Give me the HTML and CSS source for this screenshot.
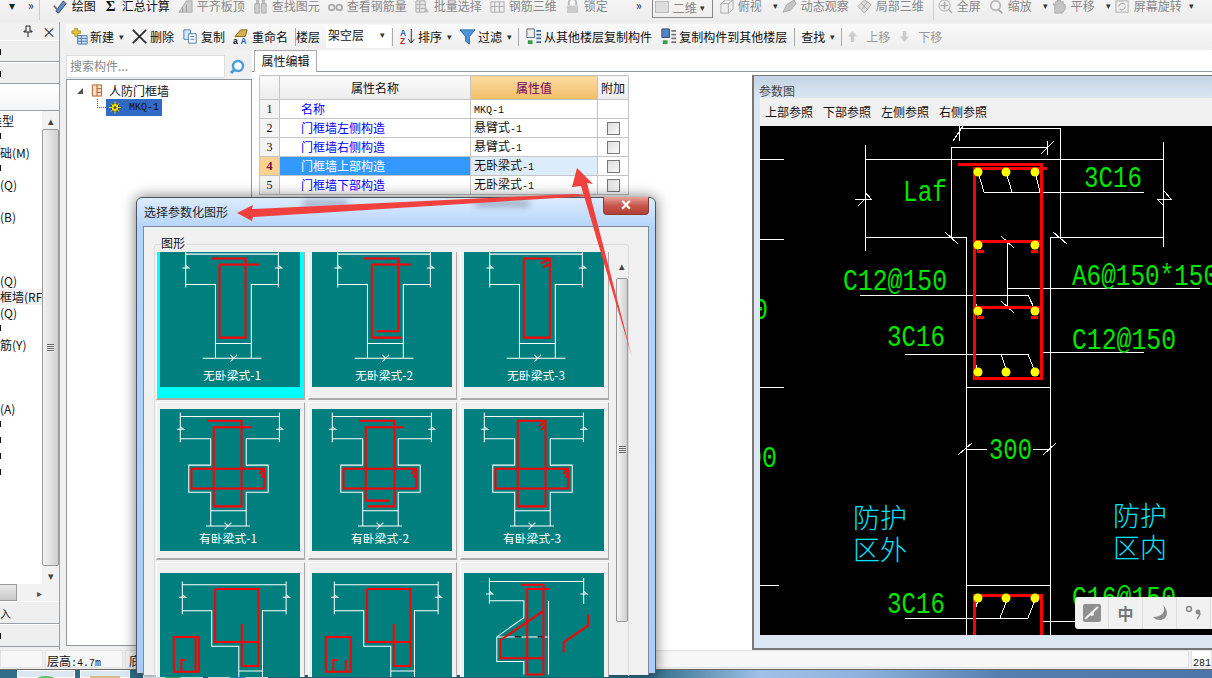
FILE: index.html
```html
<!DOCTYPE html>
<html lang="zh-CN">

<head>
    <meta charset="UTF-8">
    <title>参数化图形</title>
    <link rel="stylesheet" href="styles.css">
</head>

<body>
    <svg class="defs" width="0" height="0">
        <defs>
            <g id="t-top" class="w">
                <path d="M76 13V126M350 13V126M76 27H350M76 117H164V335M350 117H270V335M164 291H270M126 335H300" />
                <path d="M66 68H86L76 60M340 68H360L350 60M218 335L208 325M208 345L228 325" />
            </g>
            <g id="t1"><use href="#t-top" />
                <path class="r" d="M154 40H253V274H176V58H293" />
            </g>
            <g id="t2"><use href="#t-top" />
                <path class="r" d="M154 40H256V255H191M292 58H177V274H264" />
            </g>
            <g id="t3"><use href="#t-top" />
                <path class="r" d="M177 40H254V274H177ZM227 55L254 40M234 67L254 55" />
            </g>
            <g id="t-mid" class="w">
                <path d="M60 10V98M353 10V98M60 22H353M60 88H150V166H85V246H150V346M353 88H255V166H320V246H255V346M150 301H255M136 346H266" />
                <path d="M50 60H70L60 52M343 60H363L353 52M201 346L191 336M191 356L211 336" />
            </g>
            <g id="t4"><use href="#t-mid" />
                <path class="r" d="M140 35H241V288H159V54H271M93 177H308V235H93ZM293 193L308 177M300 203L308 190" />
            </g>
            <g id="t5"><use href="#t-mid" />
                <path class="r" d="M140 35H244V288H164M271 54H159V271H229M93 177H308V235H93ZM293 193L308 177M300 203L308 190" />
            </g>
            <g id="t6"><use href="#t-mid" />
                <path class="r" d="M159 35H241V288H159ZM93 177H308V235H93ZM293 193L308 177M300 203L308 190M221 52L241 35M228 62L241 48" />
            </g>
            <g id="t-low" class="w">
                <path d="M66 25V122M373 25V122M66 35H373M66 112H153V217H233V310M373 112H303V310M233 290H303" />
                <path d="M56 72H76L66 64M363 72H383L373 64" />
            </g>
            <g id="t7"><use href="#t-low" />
                <path class="r" d="M163 47H291V275H242V151M163 47V204H291M41 189H115V292H41ZM105 189V292M63 292V257H75" />
            </g>
            <g id="t8"><use href="#t-low" />
                <path class="r" d="M163 47H291V275H242V151M163 47V204H291M41 189H115V292H41ZM63 292V257H75M100 292V257" />
            </g>
        </defs>
    </svg>

    <div class="topbar">
        <span class="chev first">▾</span>
        <span class="chev">»</span>
        <span class="vsep lead"></span>
        <div class="tool on"><svg class="ico" viewBox="0 0 16 16"><path d="M3 13L11 2L14 5L6 15Z" fill="#5b8fd0" stroke="#345" /><path d="M1 7L5 12" stroke="#777" stroke-width="2" /></svg>绘图</div>
        <div class="tool on"><span class="sigma">Σ</span>汇总计算</div>
        <div class="tool"><svg class="ico" viewBox="0 0 16 16"><path d="M1 14L9 2H15V14Z" fill="#ccc" stroke="#aaa" /><path d="M5 14V9M9 14V6" stroke="#999" /></svg>平齐板顶</div>
        <div class="tool"><svg class="ico" viewBox="0 0 16 16"><path d="M2 15V5H7V15ZM9 15V5H14V15ZM4 5V1H6V5M10 5V1H12V5" fill="#ccc" stroke="#aaa" /></svg>查找图元</div>
        <div class="tool"><svg class="ico" viewBox="0 0 16 16"><circle cx="4" cy="9" r="3" fill="none" stroke="#aaa" stroke-width="2" /><circle cx="12" cy="9" r="3" fill="none" stroke="#aaa" stroke-width="2" /></svg>查看钢筋量</div>
        <div class="tool"><svg class="ico" viewBox="0 0 16 16"><path d="M1 2H11V14H1ZM1 6H11M1 10H11M5 2V14" fill="#e4e4e4" stroke="#aaa" /><path d="M11 8L15 14H10Z" fill="#bbb" /></svg>批量选择</div>
        <div class="tool"><svg class="ico" viewBox="0 0 16 16"><path d="M1 3H15V14H1ZM5 3V14M10 3V14M1 8H15" fill="#eee" stroke="#aaa" /></svg>钢筋三维</div>
        <div class="tool"><svg class="ico" viewBox="0 0 16 16"><path d="M4 7V4A4 4 0 0 1 12 4V7" fill="none" stroke="#bbb" stroke-width="2" /><rect x="2" y="7" width="12" height="8" fill="#ccc" /></svg>锁定</div>
        <span class="chev gap-a">»</span>
        <div class="view-box"><span class="view-swatch"></span>二维<span class="arrow">▾</span></div>
        <div class="tool tight"><svg class="ico" viewBox="0 0 16 16"><path d="M2 5L7 1H15V11L10 15H2ZM2 5H10V15M10 5L15 1" fill="#eee" stroke="#aaa" /></svg>俯视<span class="arrow wide">▾</span></div>
        <div class="tool"><svg class="ico" viewBox="0 0 16 16"><path d="M1 14L5 6L13 1L15 5L9 12Z" fill="#c4c4c4" stroke="#aaa" /></svg>动态观察</div>
        <div class="tool"><svg class="ico" viewBox="0 0 16 16"><path d="M8 1L15 6L8 15L1 8Z" fill="#ddd" stroke="#aaa" /><path d="M4 4L12 12M11 3L5 11" stroke="#aaa" /></svg>局部三维</div>
        <span class="vsep mid"></span>
        <div class="tool"><svg class="ico" viewBox="0 0 16 16"><circle cx="7" cy="7" r="6" fill="#eee" stroke="#aaa" /><path d="M7 3V11M3 7H11M11 11L15 15" stroke="#aaa" stroke-width="1.5" /></svg>全屏</div>
        <div class="tool"><svg class="ico" viewBox="0 0 16 16"><circle cx="7" cy="7" r="5" fill="#f4f4f4" stroke="#bbb" stroke-width="2" /><path d="M10 11L14 15" stroke="#aaa" stroke-width="2" /></svg>缩放<span class="arrow wide">▾</span></div>
        <div class="tool"><svg class="ico" viewBox="0 0 16 16"><path d="M3 15V8L1 5L4 6V3H6V1H9V3H12V6H14V11L11 15Z" fill="#c4c4c4" stroke="#aaa" /></svg>平移<span class="arrow wide">▾</span></div>
        <div class="tool"><svg class="ico" viewBox="0 0 16 16"><rect x="1" y="2" width="13" height="12" fill="#eee" stroke="#aaa" /><path d="M4 8A4 4 0 0 1 11 6M11 8A4 4 0 0 1 5 11" fill="none" stroke="#999" /></svg>屏幕旋转<span class="arrow">▾</span></div>
    </div>

    <div class="main">
        <aside class="nav">
            <div class="nav-head">
                <svg class="pin" viewBox="0 0 10 12"><path d="M3 1H7V6H9V7H1V6H3ZM5 7V12" fill="none" stroke="#222" /></svg>
                <span class="nav-close">×</span>
            </div>
            <div class="fold"><span class="tick"></span></div>
            <div class="fold"><span class="tick"></span></div>
            <div class="fold-open"></div>
            <div class="nav-list">
                <ul class="items">
                    <li class="shift">类型</li>
                    <li><span class="tick"></span></li>
                    <li>础(M)</li>
                    <li><span class="tick"></span></li>
                    <li>(Q)</li>
                    <li></li>
                    <li>(B)</li>
                    <li></li>
                    <li></li>
                    <li></li>
                    <li>(Q)</li>
                    <li class="current">框墙(RF</li>
                    <li>(Q)</li>
                    <li><span class="tick"></span></li>
                    <li>筋(Y)</li>
                    <li></li>
                    <li></li>
                    <li></li>
                    <li>(A)</li>
                    <li><span class="tick"></span></li>
                    <li><span class="tick"></span></li>
                    <li><span class="tick"></span></li>
                    <li><span class="tick"></span></li>
                </ul>
                <div class="vscroll">
                    <span class="sb-arrow">▴</span>
                    <div class="vthumb"><span class="grip"></span></div>
                    <span class="sb-arrow">▾</span>
                </div>
            </div>
            <div class="hscroll"><span class="hthumb"></span><span class="hright">▸</span></div>
            <div class="fold low">入</div>
            <div class="fold low"><span class="tick"></span></div>
        </aside>

        <div class="work">
            <div class="toolbar">
                <div class="tool2 m7"><svg class="ico2" viewBox="0 0 18 18"><path d="M4 0H7V3H10V6H7V9H4V6H1V3H4Z" fill="#e8c040" stroke="#a08020" stroke-width=".7" /><path d="M7 8H17V17H7ZM7 11H17M7 14H17M11 8V17" fill="#cfe0f4" stroke="#4a78b0" /></svg>新建<span class="arrow">▾</span></div>
                <div class="tool2"><svg class="ico2" viewBox="0 0 18 18"><path d="M2 2L16 16M16 2L2 16" stroke="#333" stroke-width="2" /></svg>删除</div>
                <div class="tool2"><svg class="ico2" viewBox="0 0 18 18"><path d="M2 2H9V12H2Z" fill="#dde8f5" stroke="#4a78b0" /><path d="M7 6H15V16H7ZM9 9H13M9 12H13" fill="#fff" stroke="#4a78b0" /></svg>复制</div>
                <div class="tool2"><svg class="ico2" viewBox="0 0 18 18"><path d="M2 9L8 2H15L13 9Z" fill="#d8b050" stroke="#806020" /><text x="0" y="17" class="mini">a</text><text x="8" y="17" class="mini blue">A</text></svg>重命名</div>
                <span class="vsep2 near"></span>
                <div class="tool2 t-floor">楼层</div>
                <div class="combo">架空层<span class="arrow">▾</span></div>
                <span class="vsep2"></span>
                <div class="tool2 m7"><svg class="ico2" viewBox="0 0 18 18"><text x="1" y="8" class="mini blue">A</text><text x="1" y="17" class="mini red">Z</text><path d="M13 1V15M10 12L13 16L16 12" fill="none" stroke="#222" /></svg>排序<span class="arrow">▾</span></div>
                <div class="tool2 m7"><svg class="ico2" viewBox="0 0 18 18"><path d="M1 2H17L11 9V17L7 14V9Z" fill="#4f96dc" stroke="#2c64a8" /></svg>过滤<span class="arrow">▾</span></div>
                <span class="vsep2"></span>
                <div class="tool2"><svg class="ico2" viewBox="0 0 18 18"><path d="M2 1H10V10H2Z" fill="#eee" stroke="#567" /><path d="M3 13H8V17H3Z" fill="#3a9a4a" /><path d="M12 3H17M12 7H17M12 11H17M12 15H17" stroke="#3a6ea8" stroke-width="2" /></svg>从其他楼层复制构件</div>
                <div class="tool2"><svg class="ico2" viewBox="0 0 18 18"><path d="M2 1H10V10H2Z" fill="#4f86d0" stroke="#345" /><path d="M3 13H8V17H3Z" fill="#3a9a4a" /><path d="M12 3H17M12 7H17M12 11H17M12 15H17" stroke="#777" stroke-width="2" /></svg>复制构件到其他楼层</div>
                <span class="vsep2"></span>
                <div class="tool2 m7">查找<span class="arrow">▾</span></div>
                <span class="vsep2"></span>
                <div class="tool2 off"><svg class="ico3" viewBox="0 0 10 12"><path d="M5 0L10 6H7V12H3V6H0Z" fill="#ccc" /></svg>上移</div>
                <div class="tool2 off"><svg class="ico3" viewBox="0 0 10 12"><path d="M5 12L10 6H7V0H3V6H0Z" fill="#ccc" /></svg>下移</div>
            </div>

            <div class="work-body">
                <div class="tree-col">
                    <div class="search">
                        <div class="search-box">搜索构件...</div>
                        <svg class="search-ico" viewBox="0 0 16 16"><circle cx="9" cy="7" r="5" fill="#fff" stroke="#4c9ae0" stroke-width="2.4" /><path d="M5 11L2 14" stroke="#4c9ae0" stroke-width="3" /></svg>
                    </div>
                    <div class="tree">
                        <div class="node root"><span class="twist"></span><svg class="node-ico" viewBox="0 0 12 14"><path d="M1 1H11V13H1ZM6 1V13M6 5H11M6 9H11" fill="#f8e0c8" stroke="#b05a20" /></svg>人防门框墙</div>
                        <div class="node leaf">
                            <span class="dots"></span>
                            <div class="picked"><svg class="node-ico" viewBox="0 0 12 12"><circle cx="6" cy="6" r="4" fill="#ffe600" stroke="#333" /><path d="M6 0V12M0 6H12M2 2L10 10M10 2L2 10" stroke="#ffe600" /><circle cx="6" cy="6" r="1.6" fill="#555" /></svg><span class="asc">MKQ-1</span></div>
                        </div>
                    </div>
                </div>

                <div class="editor">
                    <div class="tabs"><div class="tab">属性编辑</div></div>
                    <div class="editor-body">
                        <div class="grid-wrap">
                            <table class="props">
                                <colgroup>
                                    <col class="c-no">
                                    <col class="c-name">
                                    <col class="c-val">
                                    <col class="c-add">
                                </colgroup>
                                <tr class="head">
                                    <th></th>
                                    <th>属性名称</th>
                                    <th class="hot">属性值</th>
                                    <th>附加</th>
                                </tr>
                                <tr>
                                    <td class="no">1</td>
                                    <td class="name">名称</td>
                                    <td class="val"><span class="asc">MKQ-1</span></td>
                                    <td></td>
                                </tr>
                                <tr>
                                    <td class="no">2</td>
                                    <td class="name">门框墙左侧构造</td>
                                    <td class="val">悬臂式<span class="asc">-1</span></td>
                                    <td class="chk"><span class="box"></span></td>
                                </tr>
                                <tr>
                                    <td class="no">3</td>
                                    <td class="name">门框墙右侧构造</td>
                                    <td class="val">悬臂式<span class="asc">-1</span></td>
                                    <td class="chk"><span class="box"></span></td>
                                </tr>
                                <tr class="sel">
                                    <td class="no">4</td>
                                    <td class="name">门框墙上部构造</td>
                                    <td class="val">无卧梁式<span class="asc">-1</span></td>
                                    <td class="chk"><span class="box"></span></td>
                                </tr>
                                <tr>
                                    <td class="no">5</td>
                                    <td class="name">门框墙下部构造</td>
                                    <td class="val">无卧梁式<span class="asc">-1</span></td>
                                    <td class="chk"><span class="box"></span></td>
                                </tr>
                            </table>
                        </div>

                        <div class="param">
                            <div class="param-title">参数图</div>
                            <div class="param-menu"><span>上部参照</span><span>下部参照</span><span>左侧参照</span><span>右侧参照</span></div>
                            <svg class="canvas" viewBox="760 126 452 509">
                                <g class="cad-w">
                                    <path d="M760 159H784M760 239H784M760 387H784M760 585H779" />
                                    <path d="M865 145V251M1163 142V247M865 159H1163M865 237H966V635M1163 237H1050V635" />
                                    <path d="M855 199H871L865 192M865 199L858 206M1157 199H1171L1164 191M1157 199L1164 206" />
                                    <path d="M951 237V147H1047M1047 141V155M1041 154L1054 141M959 126V141M959 128H1060V237M953 141L963 126" />
                                    <path d="M945 232L958 244M1053 232L1067 244" />
                                    <path d="M984 192H1144M978 172L984 192M1006 172L1012 192M1035 172L1040 192" />
                                    <path d="M1007 241V307M1007 288H1200M1001 236L1014 248M1001 301L1014 313" />
                                    <path d="M860 295H1028L1035 310M973 295L978 310" />
                                    <path d="M905 354H1028L1035 372M973 354L978 372M1001 354L1007 372M1040 352H1144" />
                                    <path d="M966 387H1050M966 585H1050" />
                                    <path d="M958 455L972 443M966 449H987M1033 449H1050M1043 455L1056 443" />
                                    <path d="M905 618H1028L1035 600M973 618L978 600M1000 618L1007 600M1040 621H1080" />
                                </g>
                                <g class="cad-r">
                                    <path d="M958 164H1041V378H974V168H1047M974 241H1041M974 307H1041" />
                                    <path d="M977 251H984M1031 251H1038M977 317H984M1031 317H1038" />
                                    <path d="M974 635V595H1041V635" />
                                </g>
                                <g class="cad-y">
                                    <circle cx="978" cy="172" r="4.5" />
                                    <circle cx="1006" cy="172" r="4.5" />
                                    <circle cx="1035" cy="172" r="4.5" />
                                    <circle cx="978" cy="245" r="4.5" />
                                    <circle cx="1035" cy="245" r="4.5" />
                                    <circle cx="978" cy="311" r="4.5" />
                                    <circle cx="1035" cy="311" r="4.5" />
                                    <circle cx="978" cy="372" r="4.5" />
                                    <circle cx="1006" cy="372" r="4.5" />
                                    <circle cx="1035" cy="372" r="4.5" />
                                    <circle cx="978" cy="598" r="4.5" />
                                    <circle cx="1006" cy="598" r="4.5" />
                                    <circle cx="1035" cy="598" r="4.5" />
                                </g>
                                <g class="cad-t">
                                    <text x="1084" y="187" textLength="58" lengthAdjust="spacingAndGlyphs">3C16</text>
                                    <text x="903" y="201" textLength="44" lengthAdjust="spacingAndGlyphs">Laf</text>
                                    <text x="843" y="290" textLength="104" lengthAdjust="spacingAndGlyphs">C12@150</text>
                                    <text x="1072" y="285" textLength="146" lengthAdjust="spacingAndGlyphs">A6@150*150</text>
                                    <text x="887" y="346" textLength="58" lengthAdjust="spacingAndGlyphs">3C16</text>
                                    <text x="1072" y="349" textLength="104" lengthAdjust="spacingAndGlyphs">C12@150</text>
                                    <text x="753" y="319" textLength="15" lengthAdjust="spacingAndGlyphs">0</text>
                                    <text x="747" y="467" textLength="30" lengthAdjust="spacingAndGlyphs">00</text>
                                    <text x="989" y="459" textLength="43" lengthAdjust="spacingAndGlyphs">300</text>
                                    <text x="887" y="613" textLength="58" lengthAdjust="spacingAndGlyphs">3C16</text>
                                    <text x="1072" y="607" textLength="104" lengthAdjust="spacingAndGlyphs">C16@150</text>
                                </g>
                                <g class="cad-c">
                                    <text x="853" y="528">防护</text>
                                    <text x="853" y="560">区外</text>
                                    <text x="1113" y="526">防护</text>
                                    <text x="1113" y="558">区内</text>
                                </g>
                            </svg>
                            <div class="param-foot"></div>
                        </div>
                    </div>
                </div>
            </div>
        </div>
    </div>

    <div class="status">
        <div class="st st-a"></div>
        <div class="st st-b">层高<span class="asc">:4.7m</span></div>
        <div class="st st-c">底</div>
        <div class="st st-d"></div>
        <div class="st st-e"><span class="asc">281</span></div>
    </div>

    <div class="taskbar">
        <div class="task"><span class="blob b-arc"></span></div>
        <div class="task"><span class="blob b-pic"></span></div>
        <div class="task wide"><span class="blob b-green"></span></div>
        <div class="task wide"><span class="blob b-blue"></span></div>
    </div>

    <section class="dialog">
        <span class="ghost g1"></span>
        <span class="ghost g2"></span>
        <div class="dlg-title">选择参数化图形</div>
        <div class="dlg-close">×</div>
        <div class="dlg-body">
            <div class="group">
                <div class="group-label">图形</div>
                <div class="group-in">
                    <div class="shapes">
                        <div class="cell picked-cell"><svg class="thumb" viewBox="0 0 414 420"><use href="#t1" /><text x="213" y="400">无卧梁式-1</text></svg></div>
                        <div class="cell"><svg class="thumb" viewBox="0 0 414 420"><use href="#t2" /><text x="213" y="400">无卧梁式-2</text></svg></div>
                        <div class="cell"><svg class="thumb" viewBox="0 0 414 420"><use href="#t3" /><text x="213" y="400">无卧梁式-3</text></svg></div>
                        <div class="cell"><svg class="thumb" viewBox="0 0 414 420"><use href="#t4" /><text x="201" y="397">有卧梁式-1</text></svg></div>
                        <div class="cell"><svg class="thumb" viewBox="0 0 414 420"><use href="#t5" /><text x="201" y="397">有卧梁式-2</text></svg></div>
                        <div class="cell"><svg class="thumb" viewBox="0 0 414 420"><use href="#t6" /><text x="201" y="397">有卧梁式-3</text></svg></div>
                        <div class="cell last"><svg class="thumb" viewBox="0 0 414 420"><use href="#t7" /></svg></div>
                        <div class="cell last"><svg class="thumb" viewBox="0 0 414 420"><use href="#t8" /></svg></div>
                        <div class="cell last"><svg class="thumb" viewBox="0 0 414 420">
                                <g class="w">
                                    <path d="M75 15V92M354 15V92M75 25H354M75 82H177V132L97 189V262H177V300M250 82V300M97 189H247" />
                                    <path d="M65 62H85L75 54M344 62H364L354 54" />
                                </g>
                                <path d="M150 189H170M218 189H238" stroke="#000" stroke-width="4" />
                                <path class="r" d="M169 35H235V300H187V47H252M107 199L235 112M107 199V252H235M367 122V155L295 205V235" />
                            </svg></div>
                    </div>
                    <div class="dlg-scroll">
                        <span class="sb-arrow up">▴</span>
                        <div class="dlg-thumb"><span class="grip"></span></div>
                    </div>
                </div>
            </div>
        </div>
    </section>

    <svg class="marks" viewBox="0 0 1212 678">
        <path d="M237 213L253 205L252 209L575 194L590 196L253 217L252 221Z" />
        <path d="M577 168L593 184L587 183L632 357L581 186L572 187Z" />
    </svg>

    <div class="ime">
        <div class="ime-cell"><svg class="ime-ico" viewBox="0 0 18 18"><rect width="18" height="18" rx="2" fill="#8f8f8f" /><path d="M2 15L15 3" stroke="#eee" stroke-width="2" /><circle cx="9" cy="10" r="2" fill="#eee" /></svg></div>
        <div class="ime-cell ime-zh">中</div>
        <div class="ime-cell"><svg class="ime-ico" viewBox="0 0 18 18"><path d="M12 1C15 7 12 13 2 13C6 18 16 17 16 9C16 6 14 3 12 1Z" fill="#8f8f8f" /></svg></div>
        <div class="ime-cell"><svg class="ime-ico" viewBox="0 0 18 18"><circle cx="4" cy="5" r="2.4" fill="none" stroke="#888" stroke-width="1.5" /><circle cx="13" cy="8" r="2.4" fill="#888" /><path d="M15 9C15 12 14 13 12 15" stroke="#888" stroke-width="1.5" fill="none" /></svg></div>
    </div>
</body>

</html>
```

FILE: styles.css
```css
* {
    box-sizing: border-box;
}

html,
body {
    margin: 0;
    width: 1212px;
    height: 678px;
    overflow: hidden;
}

body {
    position: relative;
    background-color: #f0f0f0;
    color: #111;
    font-family: "Noto Sans CJK SC", "Liberation Sans", sans-serif;
    font-size: 12px;
    line-height: 14px;
}

.defs {
    position: absolute;
}

.asc {
    font-family: "Liberation Mono", monospace;
    font-size: 10px;
}

.arrow {
    font-size: 9px;
    margin-left: 3px;
    color: #333;
}

.arrow.wide {
    margin: 0 -4px 0 7px;
}

/* top toolbar */
.topbar {
    display: flex;
    height: 22px;
    padding-left: 9px;
    background: linear-gradient(#f4f4f4, #ececec);
    color: #888;
    overflow: hidden;
}

.chev {
    color: #222;
    line-height: 10px;
    margin-left: 13px;
}

.chev.first {
    margin-left: 0;
}

.chev.gap-a {
    margin: 0 10px 0 20px;
}

.vsep {
    width: 1px;
    height: 20px;
    background-color: #ccc;
}

.vsep.lead {
    margin: 0 13px 0 5px;
}

.vsep.mid {
    margin: 0 4px 0 1px;
}

.tool {
    display: flex;
    align-items: flex-start;
    gap: 4px;
    margin-right: 8px;
    margin-top: -1px;
    white-space: nowrap;
}

.tool.on {
    color: #111;
}

.tool.tight {
    margin-left: 6px;
}

.ico {
    width: 15px;
    height: 15px;
    flex: none;
}

.sigma {
    width: 14px;
    font-family: "Liberation Serif", serif;
    font-size: 15px;
    font-weight: bold;
    text-align: center;
}

.view-box {
    display: flex;
    align-items: flex-start;
    width: 61px;
    height: 20px;
    margin-top: -2px;
    padding: 2px 0 0 2px;
    border: 1px solid #888;
    white-space: nowrap;
}

.view-swatch {
    width: 14px;
    height: 12px;
    flex: none;
    margin-right: 4px;
    background-color: #ddd;
    border: 1px solid #bbb;
}

/* layout */
.main {
    display: flex;
    height: 628px;
}

.nav {
    width: 60px;
    flex: none;
    overflow: hidden;
    border-right: 1px solid #9aa0a6;
}

.nav-head {
    display: flex;
    justify-content: flex-end;
    align-items: center;
    gap: 9px;
    height: 18px;
    padding-right: 3px;
    color: #333;
}

.pin {
    width: 10px;
    height: 12px;
}

.nav-close {
    font-size: 14px;
}

.fold {
    height: 22px;
    border-top: 1px solid #fff;
    border-bottom: 1px solid #9aa0a6;
    background-color: #efefef;
    padding-top: 4px;
}

.fold.low {
    height: 23px;
    font-size: 11px;
}

.tick {
    display: block;
    width: 1px;
    height: 6px;
    margin-top: 4px;
    background-color: #111;
}

.fold-open {
    height: 26px;
    background: linear-gradient(#fff, #f4f4f4);
}

.nav-list {
    display: flex;
    height: 474px;
    background-color: #fff;
    border-top: 1px solid #9aa0a6;
}

.items {
    flex: 1;
    list-style: none;
    margin: 0;
    padding: 2px 0 0;
    overflow: hidden;
    white-space: nowrap;
}

.items li {
    height: 16px;
    line-height: 16px;
    overflow: hidden;
}

.items .shift {
    text-indent: -10px;
}

.items .current {
    background-color: #f1f1f1;
}

.vscroll {
    display: flex;
    flex-direction: column;
    width: 17px;
    background-color: #f2f2f2;
}

.sb-arrow {
    height: 18px;
    flex: none;
    color: #444;
    font-size: 11px;
    line-height: 18px;
    text-align: center;
}

.vthumb {
    display: flex;
    flex: 1;
    align-items: center;
    justify-content: center;
    border: 1px solid #999;
    border-radius: 2px;
    background: linear-gradient(90deg, #f2f2f2, #d0d0d0);
}

.grip {
    display: block;
    width: 7px;
    height: 8px;
    background: repeating-linear-gradient(#666 0 1px, #eee 1px 2px);
}

.hscroll {
    display: flex;
    justify-content: space-between;
    height: 17px;
    background-color: #f2f2f2;
}

.hthumb {
    width: 17px;
    background: linear-gradient(#e8e8e8, #c8c8c8);
    border: 1px solid #999;
    border-left: 0;
}

.hright {
    width: 22px;
    color: #555;
    font-size: 10px;
    line-height: 17px;
}

.work {
    display: flex;
    flex-direction: column;
    flex: 1;
    min-width: 0;
}

/* second toolbar */
.toolbar {
    display: flex;
    align-items: center;
    height: 25px;
    margin: 2px 0 1px 6px;
    padding-left: 5px;
    background: linear-gradient(#fafafa, #eeeeee);
    white-space: nowrap;
}

.tool2 {
    display: flex;
    align-items: center;
    gap: 2px;
    margin-right: 8px;
}

.tool2.m7 {
    margin-right: 7px;
}

.tool2.off {
    gap: 9px;
    margin-right: 10px;
    color: #999;
}

.t-floor {
    margin-right: 6px;
}

.ico2 {
    width: 17px;
    height: 17px;
    flex: none;
}

.ico3 {
    width: 9px;
    height: 11px;
}

.mini {
    font-family: "Liberation Sans", sans-serif;
    font-size: 9px;
    font-weight: bold;
}

.blue {
    fill: #2a5cc0;
}

.red {
    fill: #c03030;
}

.vsep2 {
    width: 1px;
    height: 18px;
    margin: 0 6px 0 -1px;
    background-color: #aaa;
}

.vsep2.near {
    margin-right: 0;
}

.combo {
    display: flex;
    justify-content: space-between;
    width: 65px;
    height: 23px;
    padding: 3px 6px 0 2px;
    background-color: #fff;
    margin-right: 2px;
}

.work-body {
    display: flex;
    flex: 1;
    min-height: 0;
}

.tree-col {
    width: 192px;
    flex: none;
    padding-left: 6px;
}

.search {
    display: flex;
    align-items: center;
    gap: 4px;
    height: 29px;
    padding-top: 4px;
}

.search-box {
    width: 159px;
    height: 23px;
    padding: 3px 3px;
    border: 1px solid #ddd;
    background-color: #fff;
    color: #888;
}

.search-ico {
    width: 16px;
    height: 16px;
}

.tree {
    height: 567px;
    padding-top: 2px;
    border: 1px solid #8f979e;
    background-color: #fff;
}

.node {
    display: flex;
    align-items: center;
    height: 17px;
}

.root {
    padding-left: 10px;
}

.twist {
    width: 0;
    height: 0;
    margin-right: 8px;
    border-style: solid;
    border-width: 0 0 6px 6px;
    border-color: transparent transparent #555 transparent;
}

.node-ico {
    width: 12px;
    height: 13px;
    margin-right: 3px;
}

.root .node-ico {
    margin-right: 6px;
}

.dots {
    width: 9px;
    height: 9px;
    margin: -8px 0 0 30px;
    border-left: 1px dotted #666;
    border-bottom: 1px dotted #666;
}

.picked {
    display: flex;
    align-items: center;
    gap: 2px;
    width: 56px;
    height: 17px;
    padding-left: 3px;
    background-color: #316ac5;
    color: #111;
}

.picked .node-ico {
    margin-right: 6px;
}

/* property editor */
.editor {
    display: flex;
    flex-direction: column;
    flex: 1;
    min-width: 0;
    background-color: #fff;
}

.tabs {
    height: 22px;
    flex: none;
    padding-left: 2px;
    border-bottom: 1px solid #8f979e;
}

.tab {
    width: 63px;
    height: 22px;
    padding-top: 3px;
    border: 1px solid #aaa;
    border-bottom: 0;
    background-color: #fff;
    text-align: center;
}

.editor-body {
    display: flex;
    flex: 1;
    min-height: 0;
}

.grid-wrap {
    width: 500px;
    flex: none;
    padding: 3px 0 0 7px;
}

.props {
    width: 369px;
    table-layout: fixed;
    border-collapse: collapse;
}

.c-no {
    width: 20px;
}

.c-name {
    width: 191px;
}

.c-val {
    width: 127px;
}

.c-add {
    width: 31px;
}

.props th,
.props td {
    height: 19px;
    padding: 0;
    border: 1px solid #c4c4c4;
    font-weight: normal;
}

.props .head th {
    height: 24px;
    background: linear-gradient(#fafafa, #ececec);
}

.props .head .hot {
    background: linear-gradient(#fbdca4, #f3bd66);
    color: #70005a;
}

.no {
    background-color: #f4f4f4;
    text-align: center;
    font-family: "Liberation Serif", serif;
}

.name {
    padding-left: 21px !important;
    color: #0000ff;
}

.val {
    padding-left: 3px !important;
}

.chk {
    text-align: center;
    line-height: 0;
}

.box {
    display: inline-block;
    width: 13px;
    height: 13px;
    border: 1px solid #777;
    background: linear-gradient(135deg, #ddd, #fafafa);
}

.sel .no {
    background-color: #fbd28f;
    color: #800040;
    font-weight: bold;
}

.sel .name {
    background-color: #3399ff;
    color: #fff;
}

.sel .val {
    background-color: #dcecfc;
}

/* parameter drawing */
.param {
    display: flex;
    flex-direction: column;
    flex: 1;
    min-width: 0;
    height: 575px;
    margin-top: 3px;
    padding-left: 6px;
    border-left: 2px solid #777;
    border-top: 1px solid #777;
    border-bottom: 2px solid #777;
    background-color: #dbe6f3;
    overflow: hidden;
}

.param-title {
    height: 22px;
    flex: none;
    margin-left: -6px;
    padding: 8px 0 0 5px;
    background: linear-gradient(#c3d3e3, #dbe6f2);
    color: #444;
}

.param-menu {
    display: flex;
    gap: 10px;
    height: 28px;
    flex: none;
    padding: 7px 0 0 5px;
    background-color: #f0f0f0;
}

.canvas {
    display: block;
    width: 452px;
    height: 509px;
    flex: none;
    background-color: #000;
}

.cad-w {
    fill: none;
    stroke: #fff;
    stroke-width: 1;
    shape-rendering: crispEdges;
}

.cad-r {
    fill: none;
    stroke: #f00;
    stroke-width: 3;
    shape-rendering: crispEdges;
}

.cad-y {
    fill: #ffff00;
}

.cad-t text {
    fill: #00e400;
    font-family: "Liberation Mono", monospace;
    font-size: 29px;
}

.cad-c text {
    fill: #00e5ff;
    font-size: 27px;
    font-weight: 300;
}

.param-foot {
    height: 10px;
}

/* status and task bars */
.status {
    display: flex;
    gap: 2px;
    height: 20px;
    padding-bottom: 1px;
    border-bottom: 1px solid #666;
}

.st {
    padding-top: 3px;
    background-color: #f7f7f7;
    border: 1px solid #e2e2e2;
}

.st-a {
    width: 43px;
}

.st-b {
    width: 78px;
    padding-left: 1px;
}

.st-c {
    width: 60px;
    padding-left: 3px;
}

.st-d {
    flex: 1;
}

.st-e {
    width: 21px;
    background-color: #fff;
    padding-left: 1px;
}

.taskbar {
    display: flex;
    gap: 5px;
    height: 8px;
    padding-left: 17px;
    background: linear-gradient(90deg, #2f6d88 0, #2f6d88 650px, #9fc0e8 760px, #8fb2dc 860px, #567fb0 1000px, #4d76a8 100%);
    overflow: hidden;
}

.task {
    width: 58px;
    padding-top: 5px;
    background-color: #dbe8f2;
    border: 1px solid #fff;
    text-align: center;
}

.task + .task {
    width: 50px;
}

.task.wide,
.task + .task.wide {
    width: 60px;
}

.taskbar .task:nth-child(3) {
    margin-left: 8px;
}

.blob {
    display: block;
    width: 30px;
    height: 20px;
    margin: 0 auto;
    border-radius: 50%;
}

.b-arc {
    background-color: #5abf62;
}

.b-pic {
    border-radius: 0;
    background-color: #d6bd8a;
}

.b-green {
    background-color: #35c46a;
}

.b-blue {
    background-color: #1e96f0;
}

/* dialog over the page */
.dialog {
    position: absolute;
    left: 136px;
    top: 197px;
    width: 520px;
    height: 477px;
    padding: 0 6px;
    border: 1px solid #4a5560;
    border-radius: 6px 6px 0 0;
    background: linear-gradient(#dcecff 0, #b4d4fb 30px, #a9cdf8 100%);
    box-shadow: 0 0 14px rgba(0, 0, 0, .55);
}

.ghost {
    position: absolute;
    top: 2px;
    height: 7px;
    background-color: rgba(60, 70, 90, .35);
    filter: blur(3px);
}

.g1 {
    left: 166px;
    width: 44px;
}

.g2 {
    left: 338px;
    width: 54px;
}

.dlg-title {
    position: relative;
    height: 28px;
    padding: 7px 0 0 1px;
    color: #222;
}

.dlg-close {
    position: absolute;
    top: -1px;
    right: 6px;
    width: 46px;
    height: 18px;
    border: 1px solid #8a3a34;
    border-top: 0;
    border-radius: 0 0 4px 4px;
    background: linear-gradient(#e8a49c, #c8564c 50%, #b04038);
    color: #fff;
    font-family: "Liberation Sans", sans-serif;
    font-size: 18px;
    font-weight: bold;
    line-height: 16px;
    text-align: center;
}

.dlg-body {
    height: 449px;
    padding: 17px 19px 0 10px;
    border: 1px solid #7d8894;
    border-bottom: 0;
    background-color: #f0f0f0;
}

.group {
    height: 432px;
    border: 1px solid #dcdcdc;
    border-bottom: 0;
    border-radius: 3px 3px 0 0;
}

.group-label {
    width: 26px;
    height: 14px;
    margin: -9px 0 0 6px;
    background-color: #f0f0f0;
}

.group-in {
    display: flex;
    height: 425px;
    margin-top: 2px;
    padding-left: 1px;
    overflow: hidden;
}

.shapes {
    display: grid;
    grid-template-columns: repeat(3, 149px);
    grid-template-rows: 162px 158px 157px;
    column-gap: 3px;
    row-gap: 2px;
    width: 453px;
    flex: none;
    margin-top: -14px;
}

.cell {
    padding: 6px 0 0 3px;
    border: 1px solid #fff;
    border-right-color: #aaa;
    border-bottom: 2px solid #aaa;
    background-color: #f0f0f0;
}

.cell.last {
    padding-top: 10px;
}

.picked-cell {
    background-color: #00ffff;
}

.thumb {
    display: block;
    width: 140px;
    height: 142px;
    background-color: #007f7f;
}

.w {
    fill: none;
    stroke: #fff;
    stroke-width: 3;
}

.r {
    fill: none;
    stroke: #f00;
    stroke-width: 6;
}

.thumb text {
    fill: #fff;
    font-size: 35px;
    text-anchor: middle;
}

.dlg-scroll {
    display: flex;
    flex-direction: column;
    width: 17px;
    margin-left: 7px;
}

.sb-arrow.up {
    height: 26px;
    line-height: 26px;
}

.dlg-thumb {
    display: flex;
    align-items: center;
    justify-content: center;
    height: 344px;
    border: 1px solid #999;
    border-radius: 2px;
    background: linear-gradient(90deg, #f4f4f4, #cfcfcf);
}

.marks {
    position: absolute;
    left: 0;
    top: 0;
    width: 1212px;
    height: 678px;
    fill: #f0413f;
    pointer-events: none;
}

/* input method floating bar */
.ime {
    position: absolute;
    left: 1075px;
    top: 597px;
    display: flex;
    width: 137px;
    height: 32px;
    border-radius: 3px 0 0 3px;
    background-color: #f1f1f1;
    box-shadow: 0 1px 2px rgba(0, 0, 0, .4);
}

.ime-cell {
    display: flex;
    align-items: center;
    justify-content: center;
    width: 34px;
    border-right: 1px solid #ddd;
}

.ime-ico {
    width: 18px;
    height: 18px;
}

.ime-zh {
    color: #777;
    font-size: 16px;
    font-weight: bold;
}
```
